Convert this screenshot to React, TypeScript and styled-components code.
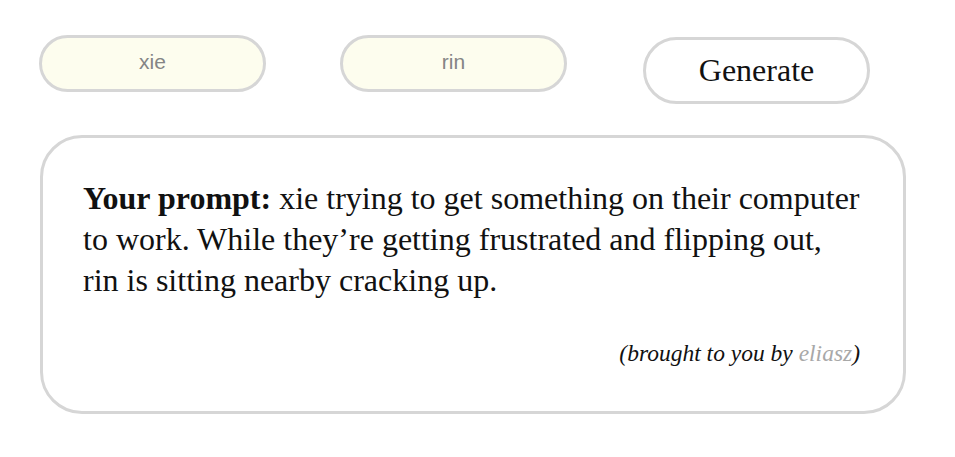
import React from 'react';
import styled, { createGlobalStyle } from 'styled-components';

const GlobalStyle = createGlobalStyle`
  html, body {
    margin: 0;
    padding: 0;
    background: #fff;
  }
  body {
    font-family: 'Liberation Serif', 'Times New Roman', serif;
    color: #111;
  }
`;

const Page = styled.div`
  padding: 35px 49px 0 39px;
`;

const Controls = styled.div`
  display: flex;
  align-items: flex-start;
  gap: 74px;
`;

const NameInput = styled.input`
  box-sizing: border-box;
  width: 227px;
  height: 57px;
  border: 3px solid #d6d6d6;
  border-radius: 29px;
  background: #fdfdee;
  color: #858585;
  font-family: 'Liberation Sans', Arial, sans-serif;
  font-size: 21px;
  text-align: center;
  padding: 0 0 3px;
  outline: none;
`;

const GenerateButton = styled.button`
  box-sizing: border-box;
  width: 227px;
  height: 67px;
  margin-top: 2px;
  margin-left: 2px;
  border: 3px solid #d6d6d6;
  border-radius: 34px;
  background: #fff;
  color: #111;
  font-family: 'Liberation Serif', 'Times New Roman', serif;
  font-size: 32px;
  cursor: pointer;
`;

const Card = styled.div`
  box-sizing: border-box;
  width: 866px;
  margin: 31px 0 0 1px;
  padding: 40px 42px 44px 40px;
  border: 3px solid #d6d6d6;
  border-radius: 42px;
`;

const Prompt = styled.p`
  margin: 0;
  font-size: 32px;
  line-height: 41px;
`;

const Label = styled.strong`
  font-weight: bold;
`;

const Credit = styled.p`
  margin: 38px 1px 0 0;
  text-align: right;
  font-style: italic;
  font-size: 23.5px;
  line-height: 28px;
`;

const Author = styled.span`
  color: #a8a8a8;
`;

export default function App() {
  return (
    <>
      <GlobalStyle />
      <Page>
        <Controls>
          <NameInput defaultValue="xie" />
          <NameInput defaultValue="rin" />
          <GenerateButton>Generate</GenerateButton>
        </Controls>
        <Card>
          <Prompt>
            <Label>Your prompt:</Label> xie trying to get something on their computer to
            work. While they’re getting frustrated and flipping out, rin is sitting nearby
            cracking up.
          </Prompt>
          <Credit>
            (brought to you by <Author>eliasz</Author>)
          </Credit>
        </Card>
      </Page>
    </>
  );
}
